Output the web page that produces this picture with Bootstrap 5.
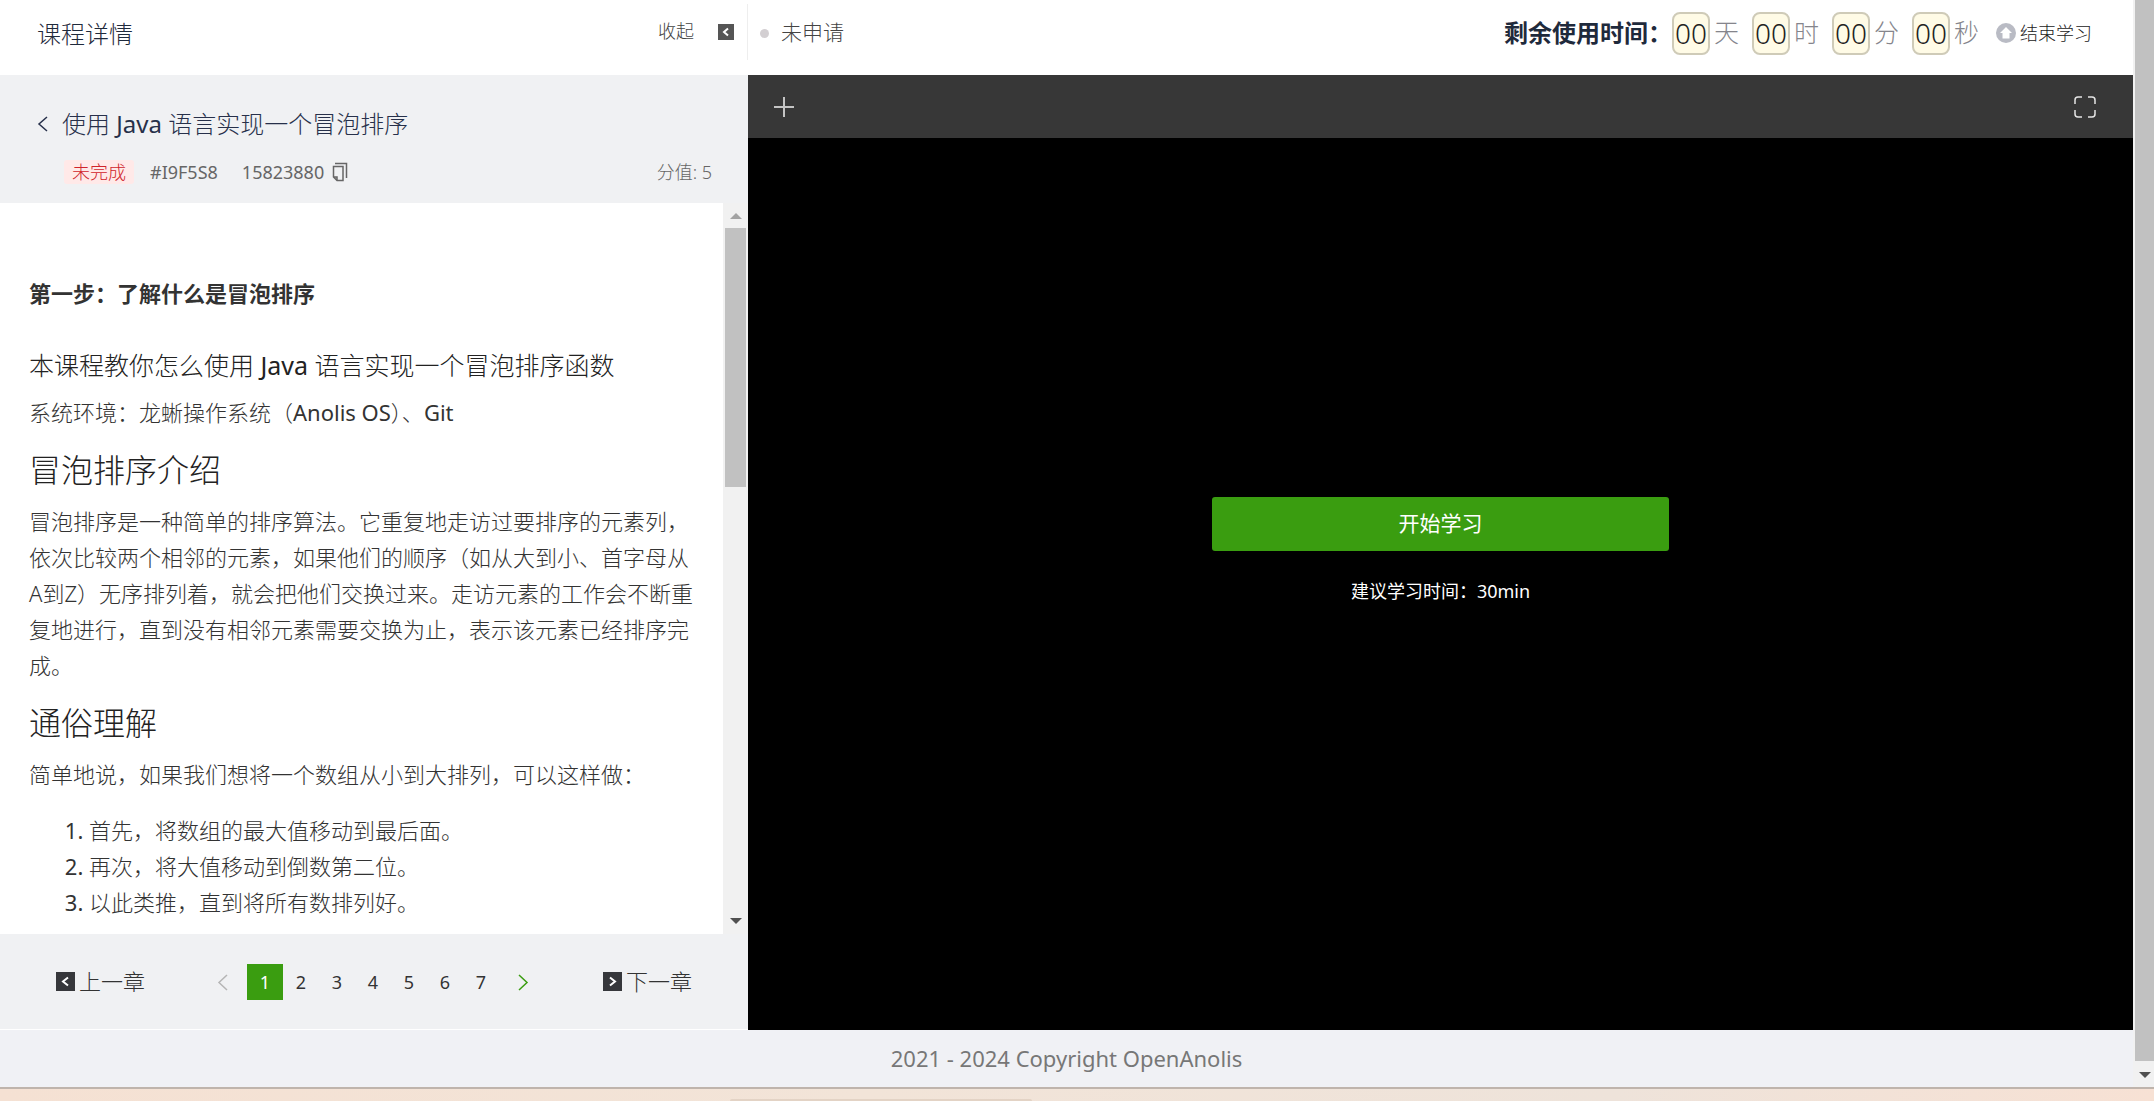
<!DOCTYPE html>
<html lang="zh-CN">
<head>
<meta charset="utf-8">
<meta name="viewport" content="width=device-width, initial-scale=1">
<title>课程详情</title>
<link href="https://cdn.jsdelivr.net/npm/bootstrap@5.3.0/dist/css/bootstrap.min.css" rel="stylesheet">
<style>
:root { --green: #3a9d10; --panel: #f0f1f3; --bar: 21px; }
body { font-family: "Noto Sans", "Noto Sans CJK SC", sans-serif; font-size: 22px; color: #333; background: #f1e2d6; font-weight: 300; }
svg { display: block; flex: none; }
a { color: inherit; text-decoration: none; }
.side { width: 748px; }
.top-row { height: 75px; }
.side-bar { padding: 16px 13px 0 37px; }
.side-title { font-size: 24px; color: #1f2a3c; }
.fold-btn { font-size: 18px; color: #444; margin-bottom: 5px; font-weight: 300; }
.task-head { height: 128px; background: var(--panel); padding: 29px 36px 0; }
.task-title { font-size: 24px; line-height: 40px; color: #27304a; font-weight: 300; }
.meta { font-size: 18px; line-height: 24px; color: #666; }
.status-tag { background: #ffe9e8; color: #d0232b; border-radius: 3px; }
.article { padding: 72px 25px 0 29px; line-height: 36px; }
.article .step { font-weight: 700; margin-bottom: 36px; line-height: 36px; }
.article h4, .article h2 { font-weight: 300; color: #222; margin: 0; }
.article h4 { font-size: 25px; line-height: 36px; margin-bottom: 11px; }
.article h2 { font-size: 32px; line-height: 44px; margin: 18px 0 11px; }
.article p { margin: 0; }
.article ol { margin: 20px 0 0; padding-left: 60px; }
.article li::marker { font-weight: 400; }
.track { background: #f1f1f1; flex: none; }
.track-side { width: 25px; padding: 10px 0; }
.thumb-side { width: 21px; height: 259px; background: #c1c1c1; margin-top: 9px; }
.pager { height: 96px; background: var(--panel); padding: 0 56px; border-bottom: 1px solid #fff; }
.pager a { font-size: 22px; }
.pager .page-item a { width: 36px; height: 36px; font-size: 18px; line-height: 36px; text-align: center; display: block; font-weight: 400; }
.pager .active a { background: var(--green); color: #fff; }
.work-top { padding: 0 41px 9px 12px; }
.split { border-left: 1px solid #eee; height: 56px; }
.state { font-size: 21px; color: #444; }
.remain { font-size: 24px; font-weight: 700; color: #1f2a3c; }
.digits { width: 38px; height: 43px; border: 2px solid #cfcbb8; border-radius: 8px; background: #fffbe6; font-size: 28px; line-height: 39px; color: #222; display: flex; justify-content: center; }
.unit { font-size: 25px; color: #85858c; width: 42px; padding-left: 4px; }
.end-btn { font-size: 18px; color: #222; font-weight: 300; }
.toolbar { height: 63px; background: #373737; padding: 0 37px 0 26px; }
.stage { background: #000; color: #fff; padding-bottom: 68px; }
.start-btn { width: 33%; height: 54px; background: var(--green); color: #fff; font-size: 21px; border-radius: 3px; }
.advice { font-size: 18px; line-height: 26px; margin-top: 27px; font-weight: 400; }
.foot { height: 57px; background: #f0f1f5; color: #777; font-weight: 400; }
.page-track { width: var(--bar); padding: 0 0 9px 2px; }
.page-track .thumb-page { background: #c1c1c1; margin-bottom: 11px; }
.desk { height: 14px; border-top: 2px solid #bfb4ac; background: linear-gradient(90deg, #f5e1d3, #f2e4d8 40%, #eee3da 75%, #f7e1d4); }
.desk-tab { width: 302px; height: 2px; background: #e3d3c5; margin-left: 730px; border-radius: 8px 8px 0 0; }
</style>
<script src="https://cdn.jsdelivr.net/npm/bootstrap@5.3.0/dist/js/bootstrap.bundle.min.js"></script>
</head>
<body>
<div class="d-flex flex-column vh-100 overflow-hidden">
  <div class="d-flex flex-fill overflow-hidden">
    <div class="d-flex flex-column flex-fill overflow-hidden">
      <div class="d-flex flex-fill overflow-hidden">
        <aside class="side d-flex flex-column flex-shrink-0">
          <header class="top-row bg-white d-flex align-items-start">
            <div class="side-bar d-flex flex-fill align-items-center justify-content-between">
              <span class="side-title">课程详情</span>
              <button class="btn p-0 border-0 fold-btn d-flex align-items-center">收起
                <svg class="ms-4" width="16" height="16" viewBox="0 0 16 16"><rect width="16" height="16" fill="#555"/><path d="M10 4.500 6 8l4 3.500" fill="none" stroke="#fff" stroke-width="2"/></svg>
              </button>
            </div>
            <div class="split mt-1"></div>
          </header>
          <section class="task-head">
            <h1 class="task-title d-flex align-items-center m-0">
              <a href="#" aria-label="返回"><svg width="14" height="16" viewBox="0 0 14 16"><path d="M11 1 3 8l8 7" fill="none" stroke="#27304a" stroke-width="1.500"/></svg></a>
              <span class="ms-2 ps-1">使用 <span class="fw-normal">Java</span> 语言实现一个冒泡排序</span>
            </h1>
            <div class="meta d-flex align-items-center mt-3 ps-4">
              <span class="status-tag px-2 ms-1">未完成</span>
              <span class="ms-3 fw-normal">#I9F5S8</span>
              <span class="ms-4 fw-normal">15823880</span>
              <button class="btn p-0 border-0 ms-2" aria-label="复制"><svg width="16" height="20" viewBox="0 0 16 20"><path d="M3 1.500h11.500V16M1.500 4.500h9.500v14H5l-3.500-3.500zM5 18.500V15H1.500" fill="none" stroke="#666" stroke-width="1.500"/></svg></button>
              <span class="ms-auto">分值: 5</span>
            </div>
          </section>
          <div class="d-flex flex-fill bg-white overflow-hidden">
            <article class="article flex-fill overflow-hidden">
              <p class="step">第一步：了解什么是冒泡排序</p>
              <h4>本课程教你怎么使用 <span class="fw-normal">Java</span> 语言实现一个冒泡排序函数</h4>
              <p>系统环境：龙蜥操作系统（<span class="fw-normal">Anolis OS</span>）、<span class="fw-normal">Git</span></p>
              <h2>冒泡排序介绍</h2>
              <p>冒泡排序是一种简单的排序算法。它重复地走访过要排序的元素列，依次比较两个相邻的元素，如果他们的顺序（如从大到小、首字母从A到Z）无序排列着，就会把他们交换过来。走访元素的工作会不断重复地进行，直到没有相邻元素需要交换为止，表示该元素已经排序完成。</p>
              <h2>通俗理解</h2>
              <p>简单地说，如果我们想将一个数组从小到大排列，可以这样做：</p>
              <ol>
                <li>首先，将数组的最大值移动到最后面。</li>
                <li>再次，将大值移动到倒数第二位。</li>
                <li>以此类推，直到将所有数排列好。</li>
              </ol>
            </article>
            <div class="track track-side d-flex flex-column align-items-center">
              <svg width="12" height="6" viewBox="0 0 12 6"><path d="M6 0l6 6H0z" fill="#a3a3a3"/></svg>
              <div class="thumb-side"></div>
              <svg class="mt-auto" width="12" height="6" viewBox="0 0 12 6"><path d="M0 0h12L6 6z" fill="#505050"/></svg>
            </div>
          </div>
          <nav class="pager d-flex align-items-center justify-content-between" aria-label="章节">
            <a href="#" class="d-flex align-items-center"><svg class="me-1" width="19" height="19" viewBox="0 0 19 19"><rect width="19" height="19" fill="#36373b"/><path d="M12 5.500 7 9.500l5 4" fill="none" stroke="#fff" stroke-width="2"/></svg>上一章</a>
            <ul class="list-unstyled d-flex align-items-center m-0">
              <li><a href="#" aria-label="上一页"><svg width="46" height="20" viewBox="0 0 46 20"><path d="M26 3l-8 7.500 8 7.500" fill="none" stroke="#b5b5b5" stroke-width="1.500"/></svg></a></li>
              <li class="page-item active"><a href="#">1</a></li>
              <li class="page-item"><a href="#">2</a></li>
              <li class="page-item"><a href="#">3</a></li>
              <li class="page-item"><a href="#">4</a></li>
              <li class="page-item"><a href="#">5</a></li>
              <li class="page-item"><a href="#">6</a></li>
              <li class="page-item"><a href="#">7</a></li>
              <li><a href="#" aria-label="下一页"><svg width="48" height="20" viewBox="0 0 48 20"><path d="M20 3l8 7.500-8 7.500" fill="none" stroke="#3a9d10" stroke-width="1.500"/></svg></a></li>
            </ul>
            <a href="#" class="d-flex align-items-center"><svg class="me-1" width="19" height="19" viewBox="0 0 19 19"><rect width="19" height="19" fill="#36373b"/><path d="M7 5.500l5 4-5 4" fill="none" stroke="#fff" stroke-width="2"/></svg>下一章</a>
          </nav>
        </aside>
        <main class="d-flex flex-column flex-fill">
          <header class="top-row work-top bg-white d-flex align-items-center">
            <svg width="9" height="9" viewBox="0 0 9 9"><circle cx="4.500" cy="4.500" r="4.500" fill="#d3cfd2"/></svg>
            <span class="state ms-2 ps-1">未申请</span>
            <span class="remain ms-auto">剩余使用时间：</span>
            <span class="digits">00</span><span class="unit">天</span>
            <span class="digits">00</span><span class="unit">时</span>
            <span class="digits">00</span><span class="unit">分</span>
            <span class="digits">00</span><span class="unit">秒</span>
            <button class="btn p-0 border-0 end-btn d-flex align-items-center ms-1"><svg class="me-1" width="20" height="20" viewBox="0 0 20 20"><circle cx="10" cy="10" r="10" fill="#b9bbc4"/><path d="M10 4l6 6h-2.500v5.500h-7V10H4z" fill="#fff"/></svg>结束学习</button>
          </header>
          <div class="toolbar d-flex align-items-center justify-content-between">
            <button class="btn p-0 border-0" aria-label="新建"><svg width="20" height="20" viewBox="0 0 20 20"><path d="M10 0v20M0 10h20" stroke="#c4c4c4" stroke-width="2"/></svg></button>
            <button class="btn p-0 border-0" aria-label="全屏"><svg width="22" height="22" viewBox="0 0 22 22"><path d="M1 8V4q0-3 3-3h4M14 1h4q3 0 3 3v4M21 14v4q0 3-3 3h-4M8 21H4q-3 0-3-3v-4" fill="none" stroke="#e5e5e5" stroke-width="1.500"/></svg></button>
          </div>
          <div class="stage flex-fill d-flex flex-column align-items-center justify-content-center">
            <button class="btn start-btn p-0">开始学习</button>
            <div class="advice">建议学习时间：30min</div>
          </div>
        </main>
      </div>
      <footer class="foot d-flex align-items-center justify-content-center">2021 - 2024 Copyright OpenAnolis</footer>
    </div>
    <div class="track page-track d-flex flex-column align-items-center">
      <div class="thumb-page flex-fill w-100"></div>
      <svg width="12" height="6" viewBox="0 0 12 6"><path d="M0 0h12L6 6z" fill="#505050"/></svg>
    </div>
  </div>
  <div class="desk d-flex align-items-end"><div class="desk-tab"></div></div>
</div>
</body>
</html>
